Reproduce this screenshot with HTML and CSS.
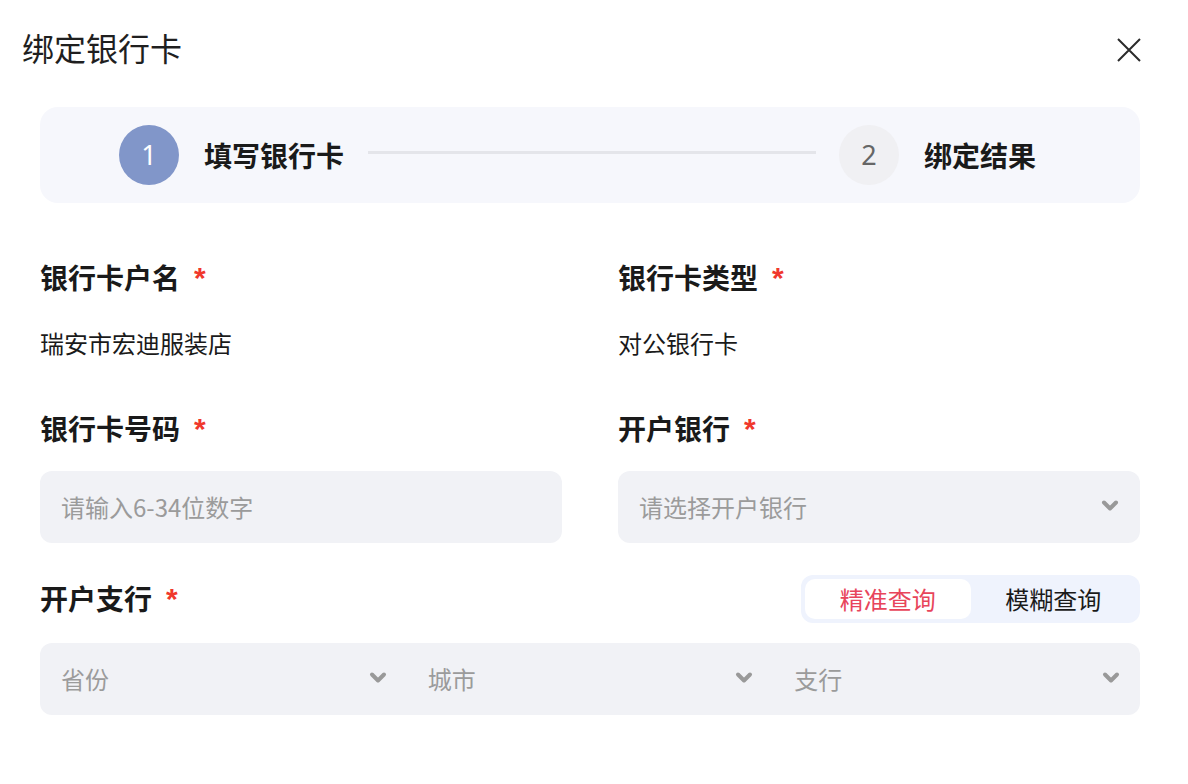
FILE: index.html
```html
<!DOCTYPE html>
<html lang="zh-CN">
<head>
  <meta charset="UTF-8">
  <meta name="viewport" content="width=device-width, initial-scale=1.0">
  <title>绑定银行卡</title>
  <link rel="stylesheet" href="styles.css">
</head>
<body>
  <div class="dialog">
    <div class="header">
      <h1>绑定银行卡</h1>
      <div class="close" title="关闭">
        <svg width="24" height="24" viewBox="0 0 24 24"><path d="M1 1 L23 23 M23 1 L1 23" stroke="#2b2b2b" stroke-width="2" fill="none"/></svg>
      </div>
    </div>

    <div class="steps">
      <div class="step active">
        <div class="num">1</div>
        <div class="step-name">填写银行卡</div>
      </div>
      <div class="step-line"></div>
      <div class="step">
        <div class="num">2</div>
        <div class="step-name">绑定结果</div>
      </div>
    </div>

    <div class="form">
      <div class="field">
        <div class="label">银行卡户名<span class="req">*</span></div>
        <div class="value">瑞安市宏迪服装店</div>
      </div>
      <div class="field">
        <div class="label">银行卡类型<span class="req">*</span></div>
        <div class="value">对公银行卡</div>
      </div>
      <div class="field">
        <div class="label">银行卡号码<span class="req">*</span></div>
        <div class="input">请输入6-34位数字</div>
      </div>
      <div class="field">
        <div class="label">开户银行<span class="req">*</span></div>
        <div class="input select">
          <span>请选择开户银行</span>
          <svg class="arrow" width="18" height="14" viewBox="0 0 18 14"><path d="M3 3.5 L9 9.5 L15 3.5" stroke="#999" stroke-width="4" fill="none" stroke-linecap="round" stroke-linejoin="round"/></svg>
        </div>
      </div>
    </div>

    <div class="branch-head">
      <div class="label">开户支行<span class="req">*</span></div>
      <div class="segment">
        <div class="seg-item on">精准查询</div>
        <div class="seg-item">模糊查询</div>
      </div>
    </div>

    <div class="branch-row">
      <div class="branch-cell">
        <span>省份</span>
        <svg class="arrow" width="18" height="14" viewBox="0 0 18 14"><path d="M3 3.5 L9 9.5 L15 3.5" stroke="#999" stroke-width="4" fill="none" stroke-linecap="round" stroke-linejoin="round"/></svg>
      </div>
      <div class="branch-cell">
        <span>城市</span>
        <svg class="arrow" width="18" height="14" viewBox="0 0 18 14"><path d="M3 3.5 L9 9.5 L15 3.5" stroke="#999" stroke-width="4" fill="none" stroke-linecap="round" stroke-linejoin="round"/></svg>
      </div>
      <div class="branch-cell">
        <span>支行</span>
        <svg class="arrow" width="18" height="14" viewBox="0 0 18 14"><path d="M3 3.5 L9 9.5 L15 3.5" stroke="#999" stroke-width="4" fill="none" stroke-linecap="round" stroke-linejoin="round"/></svg>
      </div>
    </div>
  </div>
</body>
</html>
```

FILE: styles.css
```css
body {
  margin: 0;
  padding: 0;
  background-color: #ffffff;
  color: #1a1a1a;
  font-family: "Noto Sans CJK SC", "Noto Sans", sans-serif;
}
.dialog {
  width: 1100px;
  padding: 0 48px 0 40px;
}
.header {
  height: 100px;
  display: flex;
  align-items: center;
  justify-content: space-between;
  margin-left: -18px;
  margin-right: -1px;
}
h1 {
  margin: 0 0 6px;
  font-size: 32px;
  font-weight: 400;
  line-height: 40px;
  color: #1f1f1f;
}
.close {
  width: 24px;
  height: 24px;
  cursor: pointer;
}
.steps {
  margin-top: 7px;
  height: 96px;
  border-radius: 18px;
  background-color: #f6f7fc;
  display: flex;
  align-items: center;
  padding-left: 79px;
}
.step {
  display: flex;
  align-items: center;
  gap: 25px;
}
.num {
  width: 60px;
  height: 60px;
  border-radius: 50%;
  background-color: #f0f0f3;
  color: #666666;
  font-size: 27px;
  line-height: 60px;
  text-align: center;
  font-family: "Noto Sans", sans-serif;
}
.step.active .num {
  background-color: #8196c9;
  color: #ffffff;
}
.step-name {
  font-size: 28px;
  font-weight: 700;
  line-height: 40px;
  color: #1a1a1a;
}
.step-line {
  width: 448px;
  height: 3px;
  margin: -6px 23px 0 24px;
  background-color: #e4e5ea;
}
.form {
  display: grid;
  grid-template-columns: 522px 522px;
  column-gap: 56px;
  margin-top: 58px;
}
.label {
  font-size: 28px;
  font-weight: 700;
  line-height: 32px;
  height: 32px;
  color: #1a1a1a;
}
.req {
  color: #f0382c;
  margin-left: 14px;
  font-family: "Liberation Sans", sans-serif;
  font-size: 30px;
  font-weight: 700;
  position: relative;
  top: -1px;
}
.value {
  margin-top: 36px;
  margin-bottom: 55px;
  font-size: 24px;
  line-height: 28px;
  color: #1a1a1a;
}
.input {
  margin-top: 27px;
  height: 72px;
  border-radius: 12px;
  background-color: #f1f2f6;
  padding: 0 21px 2px;
  box-sizing: border-box;
  display: flex;
  align-items: center;
  font-size: 24px;
  color: #9b9b9b;
}
.select {
  justify-content: space-between;
  padding-right: 21px;
}
.branch-head {
  margin-top: 32px;
  height: 48px;
  display: flex;
  align-items: center;
  justify-content: space-between;
}
.branch-head .label {
  margin-top: -2px;
}
.segment {
  width: 339px;
  height: 48px;
  box-sizing: border-box;
  padding: 4px;
  border-radius: 12px;
  background-color: #eff3fd;
  display: flex;
}
.seg-item {
  flex: 1;
  display: flex;
  align-items: center;
  justify-content: center;
  padding-bottom: 2px;
  font-size: 24px;
  color: #1a1a1a;
  border-radius: 10px;
  cursor: pointer;
}
.seg-item.on {
  background-color: #ffffff;
  color: #e8455b;
}
.branch-row {
  margin-top: 20px;
  height: 72px;
  border-radius: 12px;
  background-color: #f1f2f6;
  display: flex;
}
.branch-cell {
  flex: 1;
  display: flex;
  align-items: center;
  justify-content: space-between;
  padding: 0 20px 2px 21px;
  font-size: 24px;
  color: #9b9b9b;
}
.arrow {
  flex: none;
}
```
